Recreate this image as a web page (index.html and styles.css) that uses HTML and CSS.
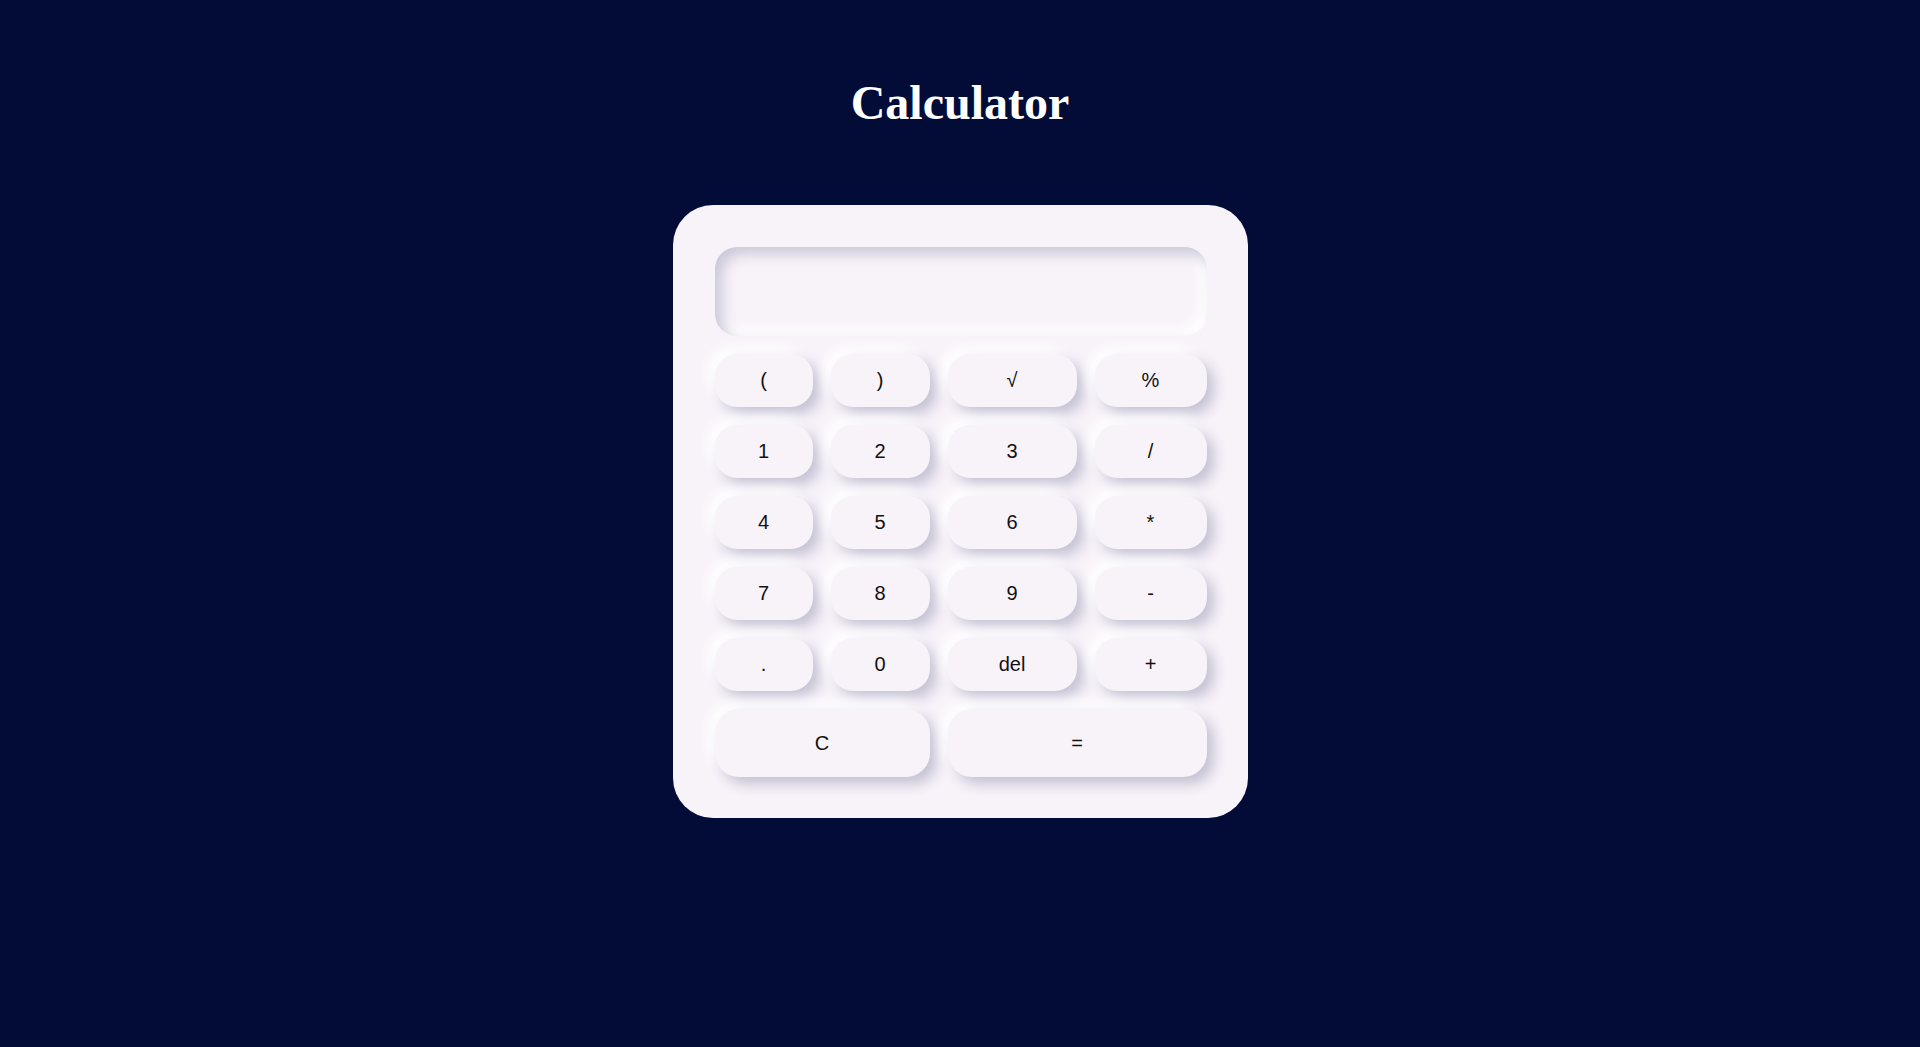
FILE: index.html
```html
<!DOCTYPE html>
<html lang="en">
<head>
<meta charset="utf-8">
<title>Calculator</title>
<link rel="stylesheet" href="styles.css">
</head>
<body>
<h1 class="title">Calculator</h1>
<div class="calc">
  <div class="display"></div>
  <div class="keys">
    <button class="key">(</button>
    <button class="key">)</button>
    <button class="key">√</button>
    <button class="key">%</button>
    <button class="key">1</button>
    <button class="key">2</button>
    <button class="key">3</button>
    <button class="key">/</button>
    <button class="key">4</button>
    <button class="key">5</button>
    <button class="key">6</button>
    <button class="key">*</button>
    <button class="key">7</button>
    <button class="key">8</button>
    <button class="key">9</button>
    <button class="key">-</button>
    <button class="key">.</button>
    <button class="key">0</button>
    <button class="key">del</button>
    <button class="key">+</button>
    <button class="key key-wide">C</button>
    <button class="key key-wide">=</button>
  </div>
</div>
</body>
</html>
```
FILE: styles.css
```css
html, body {
  margin: 0;
  padding: 0;
}
body {
  background: #020c37;
  min-height: 100vh;
  font-family: "Liberation Serif", "Times New Roman", serif;
  display: flex;
  flex-direction: column;
  align-items: center;
}
.title {
  margin: 75px 0 74px;
  font-size: 48px;
  line-height: 56px;
  font-weight: bold;
  color: #ffffff;
  text-align: center;
}
.calc {
  width: 575px;
  box-sizing: border-box;
  padding: 42px 41px 41px 42px;
  background: #f8f2f9;
  border-radius: 40px;
  display: flex;
  flex-direction: column;
  gap: 18px;
}
.display {
  height: 89px;
  border-radius: 22px;
  background: #f8f2f9;
  box-shadow: inset 7px 7px 14px #cbc9d9, inset -7px -7px 14px #ffffff;
}
.keys {
  display: grid;
  grid-template-columns: 98px 99px 129px 112px;
  grid-template-rows: repeat(5, 53px) 68px;
  gap: 18px;
}
.key {
  border: none;
  margin: 0;
  padding: 0;
  background: #f8f2f9;
  border-radius: 22px;
  font-family: "Liberation Sans", Arial, sans-serif;
  font-size: 20px;
  color: #111111;
  box-shadow: 7px 7px 14px #c3c1d3, -7px -7px 14px #ffffff;
}
.key-wide {
  grid-column: span 2;
  border-radius: 24px;
}
```
